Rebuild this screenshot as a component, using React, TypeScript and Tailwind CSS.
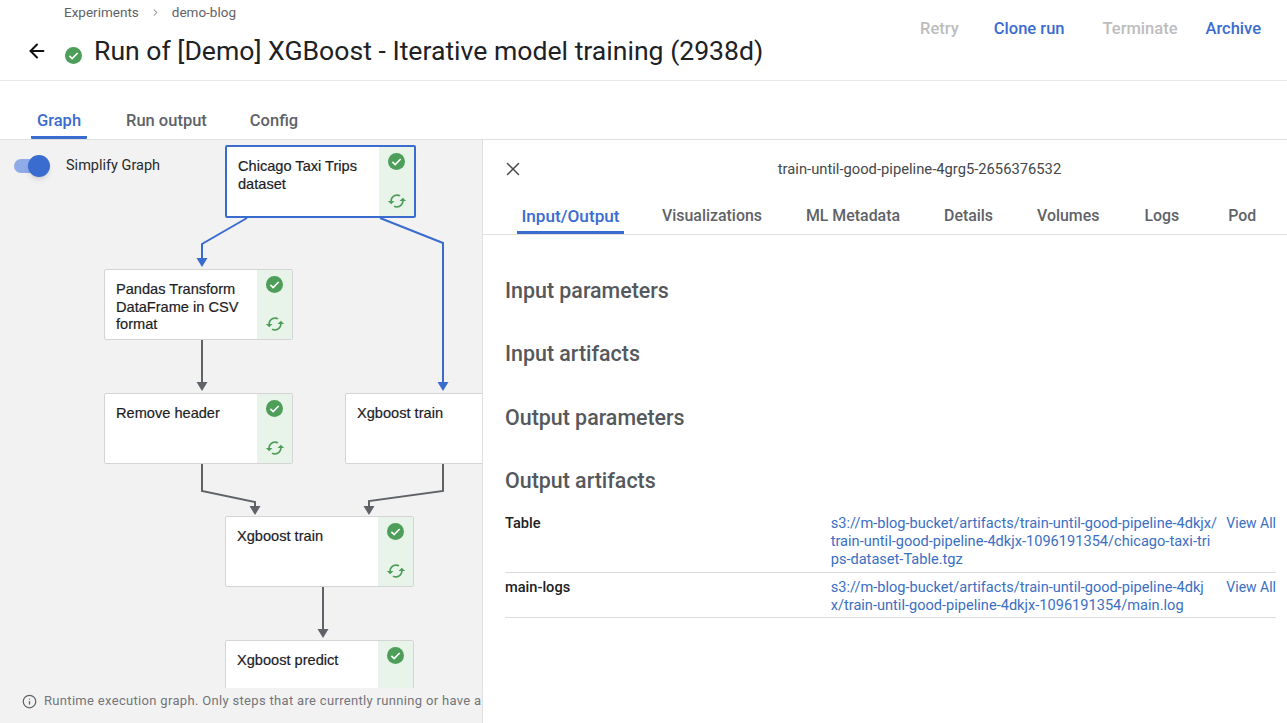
import React from 'react';
import { ArrowLeft, ChevronRight, X, Info } from 'lucide-react';

const BLUE = '#3a6cd0';
const GREY = '#5f6368';

const CheckCircle = ({ className }: { className: string }) => (
  <svg viewBox="0 0 24 24" className={className}>
    <circle cx="12" cy="12" r="12" fill="#4d9e58" />
    <path d="M6.2 12.6l3.9 3.9 7.8-8" fill="none" stroke="#fff" strokeWidth="2.3" />
  </svg>
);

const CachedIcon = () => (
  <svg viewBox="0 0 24 24" className="w-[20px] h-[20px]" fill="#4d9e58">
    <path d="M19 8l-4 4h3c0 3.31-2.69 6-6 6-1.01 0-1.97-.25-2.8-.7l-1.46 1.46C8.97 19.54 10.43 20 12 20c4.42 0 8-3.58 8-8h3l-4-4zM6 12c0-3.31 2.69-6 6-6 1.01 0 1.97.25 2.8.7l1.46-1.46C15.03 4.46 13.57 4 12 4c-4.42 0-8 3.58-8 8H1l4 4 4-4H6z" />
  </svg>
);

interface NodeProps {
  label: string;
  x: string;
  selected?: boolean;
}

const GraphNode = ({ label, x, selected }: NodeProps) => (
  <div
    className={`absolute ${x} flex bg-white rounded-[2px] overflow-hidden ${
      selected ? 'border-2 border-[#3a6cd0] w-[191px] h-[73px]' : 'border border-[#d4d4d4] w-[189px] h-[71px]'
    }`}
  >
    <div className="flex-1 pl-[11px] pt-[11px] pr-1 text-[14.6px] leading-[17.5px] text-[#1d1d1f] font-['Liberation_Sans',sans-serif] [-webkit-text-stroke:0.2px_#1d1d1f]">
      {label}
    </div>
    <div className="w-[35px] bg-[#e8f3e9] flex flex-col items-center justify-between pt-[6px] pb-[5px]">
      <CheckCircle className="w-[17px] h-[17px]" />
      <CachedIcon />
    </div>
  </div>
);

const Arrow = ({ x, y, color }: { x: number; y: number; color: string }) => (
  <polygon points={`${x - 5.5},${y - 9} ${x + 5.5},${y - 9} ${x},${y}`} fill={color} />
);

const Graph = () => (
  <div className="relative flex-1 overflow-hidden">
    <div className="absolute left-[14px] top-[14px] w-[37px] h-[24px] flex items-center">
      <div className="w-[34px] h-[14px] rounded-full bg-[#8fabe8]" />
      <div className="absolute left-[14px] top-[1px] w-[22px] h-[22px] rounded-full bg-[#3a6cd0] shadow-md" />
    </div>
    <span className="absolute left-[66px] top-[17px] text-[14.5px] leading-[18px] text-[#2a2a2a]">
      Simplify Graph
    </span>

    <svg className="absolute left-0 top-0 w-[482px] h-[560px]" fill="none" strokeWidth="2">
      <path d="M247 78 L202 104 L202 118" stroke={BLUE} />
      <Arrow x={202} y={127} color={BLUE} />
      <path d="M380 78 L443 103 L443 242" stroke={BLUE} />
      <Arrow x={443} y={251} color={BLUE} />
      <path d="M202 199 L202 243" stroke={GREY} />
      <Arrow x={202} y={251} color={GREY} />
      <path d="M202 323 L202 351 L255 362 L255 367" stroke={GREY} />
      <Arrow x={255} y={375} color={GREY} />
      <path d="M443 323 L443 351 L369 361 L369 367" stroke={GREY} />
      <Arrow x={369} y={375} color={GREY} />
      <path d="M323 447 L323 491" stroke={GREY} />
      <Arrow x={323} y={498} color={GREY} />
    </svg>

    <GraphNode label="Chicago Taxi Trips dataset" x="left-[225px] top-[5px]" selected />
    <GraphNode label="Pandas Transform DataFrame in CSV format" x="left-[104px] top-[129px]" />
    <GraphNode label="Remove header" x="left-[104px] top-[253px]" />
    <GraphNode label="Xgboost train" x="left-[345px] top-[253px]" />
    <GraphNode label="Xgboost train" x="left-[225px] top-[376px]" />
    <GraphNode label="Xgboost predict" x="left-[225px] top-[500px]" />
  </div>
);

const Row = ({ name, lines, last }: { name: string; lines: string[]; last?: boolean }) => (
  <div className={`flex border-b border-[#dcdcdc] ${last ? 'h-[45px]' : 'h-[64px]'} pt-[5px] text-[14px] leading-[18px]`}>
    <div className="w-[326px] text-[14.6px] font-medium text-[#202124]">{name}</div>
    <div className="w-[396px] text-[14.6px] text-[#3b6fc4] whitespace-nowrap">
      {lines.map((l) => (
        <div key={l}>{l}</div>
      ))}
    </div>
    <div className="text-[#3b6fc4] whitespace-nowrap">View All</div>
  </div>
);

export default function App() {
  const sections = ['Input parameters', 'Input artifacts', 'Output parameters', 'Output artifacts'];
  const tabs = ['Visualizations', 'ML Metadata', 'Details', 'Volumes', 'Logs', 'Pod'];

  return (
    <div className="w-[1287px] h-[723px] overflow-hidden bg-white flex flex-col font-['Roboto',sans-serif]">
      <header className="h-[81px] shrink-0 border-b border-[#e8e8e8] flex justify-between">
        <div>
          <div className="flex items-center pl-[64px] pt-[4px] h-[18px] mt-[1px] text-[13.5px] text-[#5f6368]">
            <span>Experiments</span>
            <ChevronRight className="w-[11px] h-[11px] mx-[11px]" strokeWidth={2} />
            <span>demo-blog</span>
          </div>
          <div className="flex items-center pl-[26px] mt-[14px]">
            <ArrowLeft className="w-[22px] h-[22px] text-[#111]" strokeWidth={2.2} />
            <CheckCircle className="w-[17px] h-[17px] ml-[17px] mt-[8px]" />
            <h1 className="ml-[12px] text-[26.6px] leading-[36px] text-[#202124] whitespace-nowrap">
              Run of [Demo] XGBoost - Iterative model training (2938d)
            </h1>
          </div>
        </div>
        <div className="flex items-start pt-[20px] pr-[26px] text-[16.5px] leading-[18px] font-medium whitespace-nowrap">
          <span className="text-[#bdbdbd]">Retry</span>
          <span className="text-[#3a6cd0] ml-[35px]">Clone run</span>
          <span className="text-[#bdbdbd] ml-[38px]">Terminate</span>
          <span className="text-[#3a6cd0] ml-[28px]">Archive</span>
        </div>
      </header>

      <nav className="h-[59px] shrink-0 border-b border-[#e0e0e0] flex items-end pl-[31px] text-[16.5px] leading-[22px] font-medium text-[#5f6368]">
        <div className="w-[56px] h-[29px] mr-[39px] text-center border-b-[3px] border-[#3a6cd0] text-[#3a6cd0] rounded-b-[1px]">
          Graph
        </div>
        <div className="h-[29px] mr-[43px]">Run output</div>
        <div className="h-[29px]">Config</div>
      </nav>

      <main className="flex-1 flex min-h-0">
        <section className="w-[483px] shrink-0 bg-[#f2f2f2] border-r border-[#e0e0e0] flex flex-col">
          <Graph />
          <div className="h-[35px] shrink-0 flex items-center pl-[22px] pb-[9px] overflow-hidden whitespace-nowrap text-[13px] text-[#72757a] tracking-[0.32px]">
            <Info className="w-[15px] h-[15px] shrink-0 mr-[7px] text-[#5f6368]" />
            Runtime execution graph. Only steps that are currently running or have already completed are shown.
          </div>
        </section>

        <section className="flex-1 min-w-0 flex flex-col">
          <div className="relative h-[59px] shrink-0 flex items-center justify-center pl-[69px] text-[14.75px] text-[#44474b]">
            <X className="absolute left-[19px] top-[18px] w-[22px] h-[22px] text-[#4a4a4a]" strokeWidth={1.6} />
            <span>train-until-good-pipeline-4grg5-2656376532</span>
          </div>
          <div className="h-[36px] shrink-0 border-b border-[#e0e0e0] flex pl-[34px] pt-[6px] text-[15.9px] leading-[22px] font-medium text-[#5f6368] whitespace-nowrap">
            <div className="h-[29px] w-[107px] text-center text-[17.2px] text-[#3a6cd0] border-b-[3px] border-[#3a6cd0]">
              Input/Output
            </div>
            <div className="ml-[38px]">{tabs[0]}</div>
            <div className="ml-[44px]">{tabs[1]}</div>
            <div className="ml-[44px]">{tabs[2]}</div>
            <div className="ml-[44px]">{tabs[3]}</div>
            <div className="ml-[45px]">{tabs[4]}</div>
            <div className="ml-[49px]">{tabs[5]}</div>
          </div>
          <div className="pl-[22px] pr-[11px] pt-[41px]">
            {sections.map((s) => (
              <h2 key={s} className="h-[63.3px] text-[21.4px] leading-[30px] font-medium text-[#55585c]">
                {s}
              </h2>
            ))}
            <div className="-mt-[20px]">
              <Row
                name="Table"
                lines={[
                  's3://m-blog-bucket/artifacts/train-until-good-pipeline-4dkjx/',
                  'train-until-good-pipeline-4dkjx-1096191354/chicago-taxi-tri',
                  'ps-dataset-Table.tgz',
                ]}
              />
              <Row
                name="main-logs"
                last
                lines={[
                  's3://m-blog-bucket/artifacts/train-until-good-pipeline-4dkj',
                  'x/train-until-good-pipeline-4dkjx-1096191354/main.log',
                ]}
              />
            </div>
          </div>
        </section>
      </main>
    </div>
  );
}
